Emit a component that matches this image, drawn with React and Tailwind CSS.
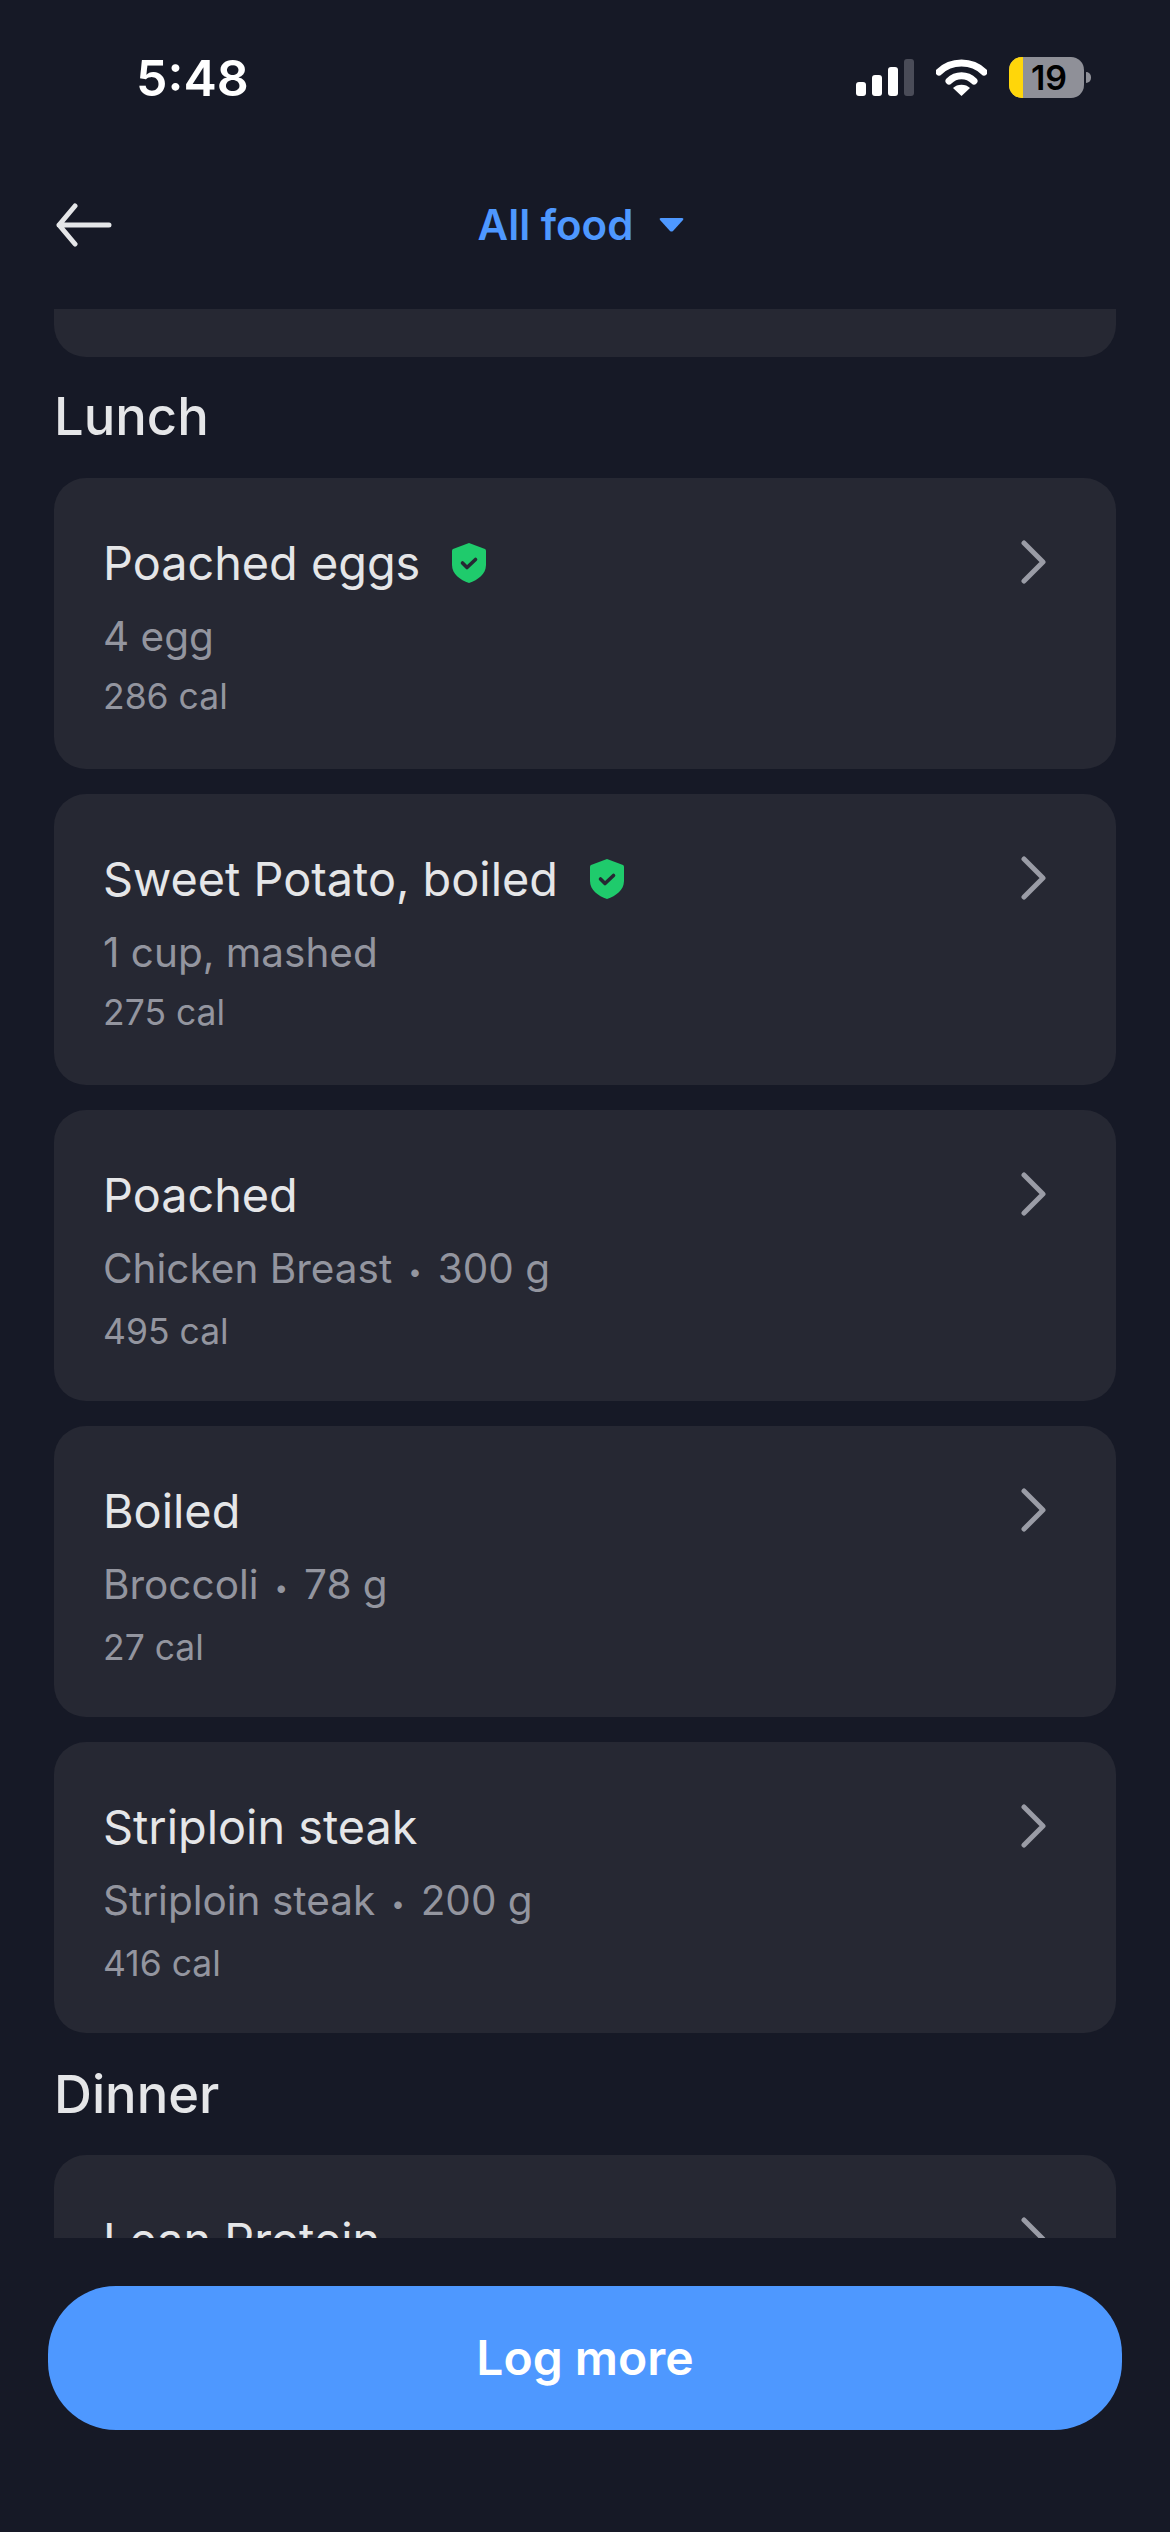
import { Fragment } from 'react';

const lunch = [
  { name: 'Poached eggs', verified: true, detail: ['4 egg'], cal: '286 cal' },
  { name: 'Sweet Potato, boiled', verified: true, detail: ['1 cup, mashed'], cal: '275 cal' },
  { name: 'Poached', detail: ['Chicken Breast', '300 g'], cal: '495 cal' },
  { name: 'Boiled', detail: ['Broccoli', '78 g'], cal: '27 cal' },
  { name: 'Striploin steak', detail: ['Striploin steak', '200 g'], cal: '416 cal' },
];

function Shield() {
  return (
    <svg width="34" height="40" viewBox="0 0 34 40" className="ml-[32px] shrink-0">
      <path d="M17 0 L33 6 Q34 6.5 34 8 V22 C34 31 26 37 17 40 C8 37 0 31 0 22 V8 Q0 6.5 1 6 Z" fill="#1fcb6c" />
      <path d="M10.5 20 L15 24.5 L23.5 16.5" fill="none" stroke="#262833" strokeWidth="3.6" strokeLinecap="round" strokeLinejoin="round" />
    </svg>
  );
}

function Chevron() {
  return (
    <svg width="26" height="44" viewBox="0 0 26 44" className="shrink-0">
      <path d="M3 3 L22 22 L3 41" fill="none" stroke="#9a9ca6" strokeWidth="5" strokeLinecap="round" strokeLinejoin="round" />
    </svg>
  );
}

function FoodCard({ item }) {
  return (
    <div className="flex h-[291px] shrink-0 items-start justify-between rounded-[32px] bg-[#262833] pl-[49px] pr-[69px] pt-[55px]">
      <div>
        <div className="flex h-[60px] items-center text-[46.8px] leading-[60px] text-[#e5e6e8]">
          {item.name}
          {item.verified && <Shield />}
        </div>
        <div className="mt-[19px] text-[40.5px] leading-[50px] text-[#93959f]">
          {item.detail.map((part, i) => (
            <Fragment key={part}>
              {i > 0 && <span className="mx-[16px] align-[3px] text-[24px]">•</span>}
              {part}
            </Fragment>
          ))}
        </div>
        <div className="mt-[12px] text-[35.5px] leading-[46px] text-[#93959f]">{item.cal}</div>
      </div>
      <div className="pt-[7px]">
        <Chevron />
      </div>
    </div>
  );
}

function StatusBar() {
  return (
    <div className="flex h-[156px] shrink-0 items-start justify-between pl-[136px] pr-[79px] pt-[49px]">
      <span className="text-[50px] font-semibold leading-[58px] text-white">5:48</span>
      <div className="flex items-center pt-[8px]">
        <div className="flex h-[37px] items-end gap-[6px]">
          <div className="h-[14px] w-[10px] rounded-[3px] bg-white" />
          <div className="h-[21px] w-[10px] rounded-[3px] bg-white" />
          <div className="h-[29px] w-[10px] rounded-[3px] bg-white" />
          <div className="h-[37px] w-[10px] rounded-[3px] bg-[#4a4c58]" />
        </div>
        <svg width="51" height="37" viewBox="0 0 51 37" className="ml-[22px]">
          <path d="M3 13 C15 1 36 1 48 13" fill="none" stroke="#fff" strokeWidth="7" strokeLinecap="round" />
          <path d="M13 22 C20 15 31 15 38 22" fill="none" stroke="#fff" strokeWidth="7" strokeLinecap="round" />
          <path d="M25.5 37 L17 29 C21 24.5 30 24.5 34 29 Z" fill="#fff" />
        </svg>
        <div className="ml-[22px] flex h-[41px] w-[75px] items-center overflow-hidden rounded-[13px] bg-[#8f9098]">
          <div className="h-full w-[14px] shrink-0 bg-[#ffd60a]" />
          <span className="flex-1 pr-[9px] text-center text-[34px] font-semibold leading-[41px] text-black">19</span>
        </div>
        <div className="ml-[2px] h-[11px] w-[5px] rounded-r-full bg-[#8f9098]" />
      </div>
    </div>
  );
}

export default function App() {
  return (
    <div className="flex h-[2532px] w-[1170px] flex-col overflow-hidden bg-[#161926] font-['Inter',sans-serif]">
      <StatusBar />

      <div className="grid h-[153px] shrink-0 grid-cols-[1fr_auto_1fr] items-start pl-[56px] pr-[64px] pt-[47px]">
        <svg width="56" height="44" viewBox="0 0 56 44">
          <path d="M53 22 H3 M19 3 L3 22 L19 41" fill="none" stroke="#e5e6e8" strokeWidth="5" strokeLinecap="round" strokeLinejoin="round" />
        </svg>
        <div className="-mt-[4px] flex items-center gap-[26px]">
          <span className="text-[42px] font-semibold leading-[52px] text-[#4e98ff]">All food</span>
          <svg width="25" height="14" viewBox="0 0 25 14">
            <path d="M2 0 H23 Q25 0 24 2 L14 13 Q12.5 14 11 13 L1 2 Q0 0 2 0 Z" fill="#4e98ff" />
          </svg>
        </div>
      </div>

      <div className="flex h-[1929px] shrink-0 flex-col overflow-hidden px-[54px]">
        <div className="h-[48px] shrink-0 rounded-b-[32px] bg-[#262833]" />
        <h2 className="mt-[26px] text-[52.5px] font-medium leading-[66px] text-[#e5e6e8]">Lunch</h2>
        <div className="mt-[29px] flex shrink-0 flex-col gap-[25px]">
          {lunch.map((item) => (
            <FoodCard key={item.name + item.cal} item={item} />
          ))}
        </div>
        <h2 className="mt-[28px] text-[52.5px] font-medium leading-[66px] text-[#e5e6e8]">Dinner</h2>
        <div className="mt-[28px]">
          <FoodCard item={{ name: 'Lean Protein', detail: [], cal: '' }} />
        </div>
      </div>

      <div className="flex flex-1 items-start justify-center px-[48px] pt-[48px]">
        <button type="button" className="h-[144px] w-full rounded-[68px] bg-[#4e98ff] text-[48px] font-semibold text-white">
          Log more
        </button>
      </div>
    </div>
  );
}
